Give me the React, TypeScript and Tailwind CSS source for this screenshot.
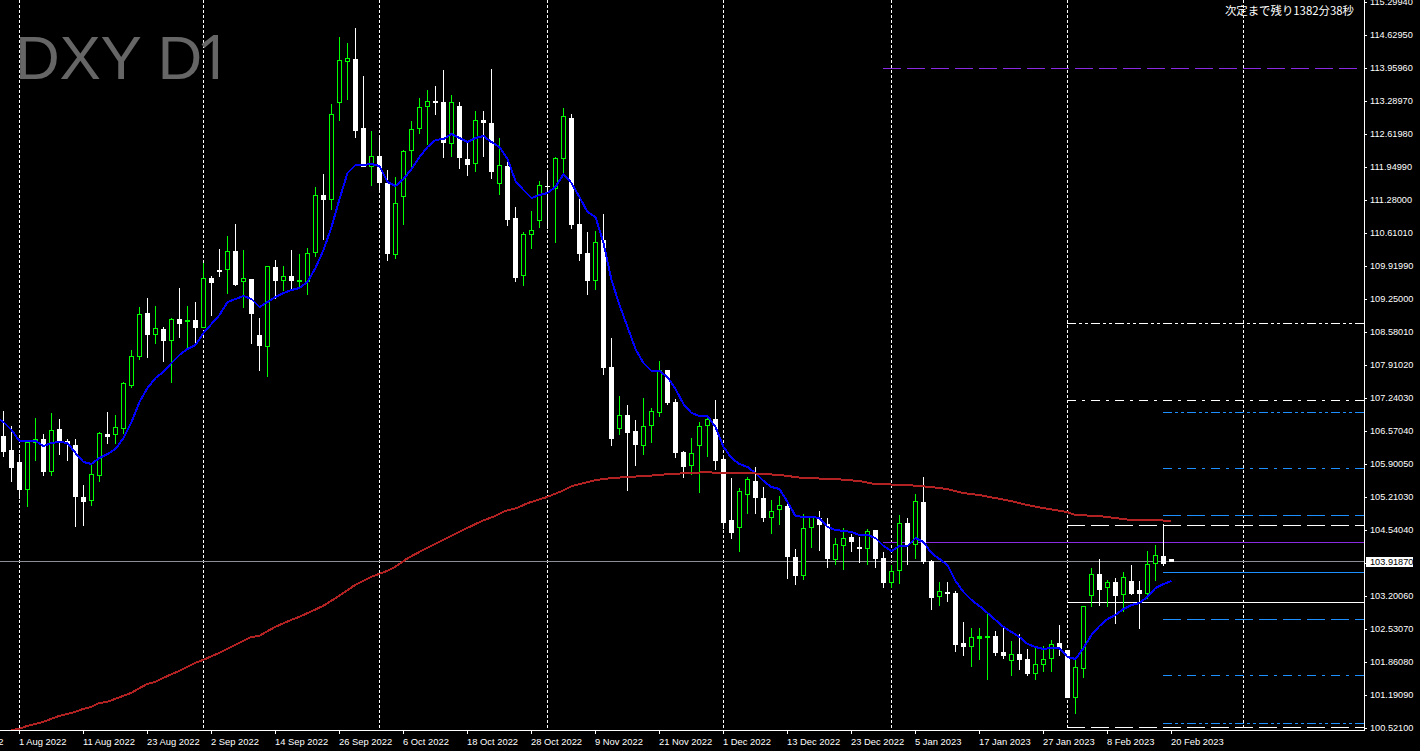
const G = 1;
const W = 0;
// type, high, bodyTop, bodyBottom, low for each daily bar (8px apart)
const bars: number[][] = [
  [W,411,436,452,457],[W,426,450,468,482],[W,454,462,490,499],[G,442,442,490,507],[G,418,439,443,461],
  [W,434,439,472,476],[G,413,430,472,476],[W,419,429,441,455],[W,439,441,444,461],[W,439,445,497,527],
  [W,485,497,502,526],[G,465,474,501,506],[G,432,433,476,482],[W,412,434,437,444],[G,415,427,435,444],
  [G,382,383,429,434],[G,350,356,386,388],[G,307,314,357,360],[W,298,313,335,358],[G,306,328,335,344],
  [W,327,329,341,362],[G,318,319,341,383],[W,288,319,324,338],[G,306,320,322,348],[W,302,320,328,343],
  [G,263,278,328,328],[W,276,278,283,316],[W,249,270,272,277],[G,236,251,270,294],[W,224,251,285,286],
  [G,250,278,282,308],[W,279,279,314,344],[W,318,335,346,371],[G,266,266,347,377],[W,260,267,281,299],
  [G,266,276,281,291],[W,250,276,281,290],[G,254,280,282,288],[G,248,253,282,295],[G,187,195,253,257],
  [W,174,195,200,240],[G,104,114,200,210],[G,37,60,103,121],[G,43,58,62,100],[W,28,59,131,138],
  [W,76,128,167,167],[G,131,156,167,186],[W,136,156,183,193],[W,170,183,254,261],[G,177,203,255,259],
  [G,150,151,197,225],[G,121,129,151,168],[G,98,107,129,134],[G,90,101,107,145],[W,86,101,103,115],
  [W,70,102,143,158],[G,95,102,144,157],[W,102,106,158,169],[W,142,159,165,176],[G,111,120,164,172],
  [W,111,120,123,157],[W,69,123,172,179],[G,138,165,184,195],[W,162,166,220,226],[W,207,218,278,282],
  [G,232,234,276,286],[G,211,230,235,249],[G,181,185,221,228],[W,172,186,187,229],[G,157,158,189,243],
  [G,108,116,159,174],[W,114,118,225,229],[W,198,224,254,261],[W,232,253,281,295],[G,231,242,281,290],
  [W,214,240,368,375],[W,338,367,439,446],[G,396,415,429,435],[W,405,415,433,491],[W,420,431,445,466],
  [G,398,426,446,455],[G,408,411,426,443],[G,361,370,413,417],[W,370,370,403,405],[W,399,402,453,458],
  [W,451,452,467,478],[G,438,453,466,475],[G,422,426,446,493],[G,418,419,426,457],[W,400,419,461,470],
  [W,458,459,523,529],[W,478,520,533,539],[G,488,491,528,552],[G,477,479,495,514],[W,467,481,498,514],
  [W,487,498,518,522],[G,500,511,518,534],[G,496,505,510,525],[W,504,506,557,579],[W,549,557,576,585],
  [G,514,528,576,580],[G,516,516,528,548],[W,511,518,525,551],[W,518,524,559,568],[G,538,544,560,565],
  [G,528,538,546,570],[W,534,537,542,552],[W,537,547,549,563],[G,529,531,549,565],[W,530,530,559,568],
  [W,552,558,583,588],[G,565,571,583,588],[G,515,523,571,584],[W,518,523,545,565],[G,494,501,545,559],
  [W,477,502,562,564],[W,560,561,598,610],[G,582,591,597,606],[W,582,592,594,602],[W,591,593,645,652],
  [W,622,643,647,656],[G,628,637,647,667],[G,628,636,639,660],[G,614,636,638,680],[W,631,636,653,656],
  [W,628,652,656,659],[G,641,654,661,676],[W,634,654,660,670],[W,649,659,674,676],[G,648,664,674,680],
  [G,646,659,665,672],[G,640,644,659,672],[W,625,643,649,656],[W,650,650,698,698],[G,660,667,698,714],
  [G,606,606,669,678],[G,568,574,596,607],[W,559,574,590,606],[G,580,582,588,607],[W,578,582,596,624],
  [G,572,577,595,612],[W,565,581,594,595],[W,581,590,594,629],[G,551,564,594,599],[G,545,555,564,581],
  [W,524,556,564,566],[W,559,559,562,562],
];

const blueMa = [
  422,430,441,441,441,446,443,442,443,453,462,464,458,454,449,438,422,402,388,378,
  372,363,355,349,345,333,324,315,302,299,296,299,307,302,297,293,290,288,282,268,
  250,227,199,173,165,165,164,166,182,186,179,169,157,147,140,139,134,138,142,138,
  136,142,147,159,181,190,198,195,193,187,174,183,197,212,217,243,280,305,327,349,
  363,371,371,377,389,404,413,416,416,427,447,458,464,467,473,481,487,489,502,516,
  517,517,518,527,530,531,532,535,535,538,546,551,546,546,538,542,553,559,565,581,
  592,600,606,613,620,627,632,637,644,647,649,648,648,657,659,648,635,626,619,615,
  609,605,603,597,588,584,581,
];

const redMa = "11,730 19,729 27,726 35,724 43,722 51,719 59,716 75,712 83,709 91,707 99,703 107,702 115,699 131,693 147,684 155,682 163,678 179,671 195,663 203,660 219,653 235,645 251,637 259,636 275,627 291,620 299,617 323,606 339,596 355,585 371,577 379,574 387,571 395,567 408,558 425,549 445,539 465,529 482,521 495,516 505,511 517,508 528,503 547,497 562,491 572,486 580,484 588,482 596,480 612,478 628,477 644,476 660,475 668,474 692,473 708,472 716,473 748,473 780,475 803,478 835,479 859,481 875,484 907,485 931,487 947,489 963,493 979,495 995,498 1011,501 1027,505 1043,508 1067,512 1075,515 1099,516 1115,518 1131,520 1155,520 1171,521";

const gridX = [19, 203, 379, 547, 723, 891, 1067, 1243];

const SOLID = "none";
const LONG = "18 6";
const DASHDOT = "9 6 3 6";
const DASH2DOT = "9 3 3 3 3 3";
const PURPLE = "#8a2be2";
const BLUE = "#1e90ff";
const levels: [number, number, number, string, string][] = [
  [68, 883, 1357, PURPLE, LONG],
  [323, 1067, 1364, "#ffffff", DASH2DOT],
  [400, 1067, 1364, "#ffffff", DASHDOT],
  [412, 1163, 1364, BLUE, DASH2DOT],
  [468, 1163, 1364, BLUE, DASHDOT],
  [515, 1163, 1364, BLUE, LONG],
  [525, 1067, 1364, "#ffffff", LONG],
  [542, 883, 1364, PURPLE, SOLID],
  [561, 0, 1364, "#8a8f96", SOLID],
  [572, 1163, 1364, BLUE, SOLID],
  [602, 1067, 1364, "#ffffff", SOLID],
  [619, 1163, 1364, BLUE, LONG],
  [675, 1163, 1364, BLUE, DASHDOT],
  [723, 1163, 1364, BLUE, DASH2DOT],
  [727, 1067, 1364, "#ffffff", LONG],
];

const prices = [
  "115.29940","114.62950","113.95960","113.28970","112.61980","111.94990","111.28000","110.61010",
  "109.91990","109.25000","108.58010","107.91020","107.24030","106.57040","105.90050","105.21030",
  "104.54040","","103.20060","102.53070","101.86080","101.19090","100.52100",
];

const dates = [
  "21 Jul 2022","1 Aug 2022","11 Aug 2022","23 Aug 2022","2 Sep 2022","14 Sep 2022","26 Sep 2022",
  "6 Oct 2022","18 Oct 2022","28 Oct 2022","9 Nov 2022","21 Nov 2022","1 Dec 2022","13 Dec 2022",
  "23 Dec 2022","5 Jan 2023","17 Jan 2023","27 Jan 2023","8 Feb 2023","20 Feb 2023",
];

function Chart() {
  return (
    <svg width={1364} height={730} className="block">
      {gridX.map((x) => (
        <line key={x} x1={x + 0.5} x2={x + 0.5} y1={0} y2={730} stroke="#ffffff" strokeDasharray="3 2" shapeRendering="crispEdges" />
      ))}
      {levels.map(([y, x1, x2, color, dash]) => (
        <line key={y} x1={x1} x2={x2} y1={y + 0.5} y2={y + 0.5} stroke={color} strokeDasharray={dash} shapeRendering="crispEdges" />
      ))}
      {bars.map(([type, high, top, bottom, low], k) => {
        const color = type === G ? "#00ff00" : "#ffffff";
        const thin = bottom - top <= 3;
        return (
          <g key={k} shapeRendering="crispEdges">
            <rect x={3 + 8 * k} y={high} width={1} height={low - high} fill={color} />
            {type === W || thin ? (
              <rect x={1 + 8 * k} y={top} width={5} height={bottom - top} fill={color} />
            ) : (
              <rect x={1.5 + 8 * k} y={top + 0.5} width={4} height={bottom - top - 1} fill="#000000" stroke={color} />
            )}
          </g>
        );
      })}
      <polyline
        points={`0,420 ${blueMa.map((y, k) => `${3.5 + 8 * k},${y}`).join(" ")}`}
        fill="none"
        stroke="#0000ff"
        strokeWidth={2}
        strokeLinejoin="round"
        shapeRendering="crispEdges"
      />
      <polyline points={redMa} fill="none" stroke="#b22222" strokeWidth={2} strokeLinejoin="round" shapeRendering="crispEdges" />
    </svg>
  );
}

export default function App() {
  return (
    <div className="relative flex h-[751px] w-[1420px] overflow-hidden bg-black font-['Liberation_Sans',sans-serif] text-[9.4px] leading-none text-white">
      <div className="flex w-[1364px] shrink-0 flex-col">
        <div className="relative h-[731px] shrink-0 border-b border-white">
          <Chart />
          <div className="absolute left-[15px] top-[20px] whitespace-nowrap text-[62px] leading-[70px] tracking-[-0.3px] text-[#666666]">
            DXY D<span className="-ml-[6px] font-['Noto_Sans',sans-serif]">1</span>
          </div>
          <div className="absolute right-[10px] top-[3px] font-['Noto_Sans_CJK_JP',sans-serif] text-[11.4px] leading-[15px]">次定まで残り1382分38秒</div>
        </div>
        <div className="-ml-[45px] flex h-[20px]">
          {dates.map((d) => (
            <div key={d} className="flex w-[64px] shrink-0 flex-col">
              <div className="h-[3px] w-px bg-white" />
              <span className="mt-[3px] whitespace-nowrap">{d}</span>
            </div>
          ))}
        </div>
      </div>
      <div className="relative h-[751px] w-[56px] shrink-0">
        <div className="absolute left-0 top-0 h-[731px] w-px bg-white" />
        <div className="-mt-[14px] flex flex-col pl-px text-[9.2px]">
          {prices.map((p, i) => (
            <div key={i} className="flex h-[33px] shrink-0 items-center gap-[3px]">
              <div className="h-px w-[2px] bg-white" />
              <span>{p}</span>
            </div>
          ))}
        </div>
        <div className="absolute left-[2px] top-[557px] h-[10px] w-[47px] bg-white pl-[4px] text-[9.2px] leading-[10px] text-black">103.91870</div>
      </div>
    </div>
  );
}
